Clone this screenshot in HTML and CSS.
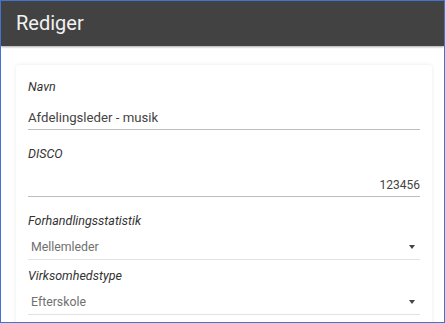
FILE: index.html
```html
<!DOCTYPE html>
<html lang="da">
<head>
    <meta charset="UTF-8">
    <meta name="viewport" content="width=device-width, initial-scale=1.0">
    <title>Rediger</title>
    <link rel="stylesheet" href="styles.css">
</head>
<body>
    <div class="frame">
        <header class="topbar">Rediger</header>
        <div class="content">
            <div class="card">
                <div class="field">
                    <div class="label">Navn</div>
                    <div class="input">Afdelingsleder - musik</div>
                </div>
                <div class="field">
                    <div class="label">DISCO</div>
                    <div class="input number">123456</div>
                </div>
                <div class="field select-field">
                    <div class="label">Forhandlingsstatistik</div>
                    <div class="select">
                        <span>Mellemleder</span>
                        <span class="arrow"></span>
                    </div>
                </div>
                <div class="field select-field">
                    <div class="label">Virksomhedstype</div>
                    <div class="select">
                        <span>Efterskole</span>
                        <span class="arrow"></span>
                    </div>
                </div>
            </div>
        </div>
    </div>
</body>
</html>
```

FILE: styles.css
```css
* {
    box-sizing: border-box;
}
html, body {
    margin: 0;
    padding: 0;
    background: #fff;
}
body {
    font-family: Roboto, "Liberation Sans", Arial, sans-serif;
    color: #333;
}
.frame {
    width: 445px;
    height: 323px;
    border: 1px solid #3f74d2;
    overflow: hidden;
}
.topbar {
    height: 45px;
    line-height: 45px;
    padding-left: 15px;
    background: #424242;
    color: #f2f2f2;
    font-size: 20px;
    box-shadow: 0 1px 2px rgba(0, 0, 0, 0.35);
    position: relative;
}
.content {
    padding: 19px 12px 0 15px;
}
.card {
    background: #fff;
    border-radius: 3px;
    box-shadow: 0 0 4px rgba(0, 0, 0, 0.09);
    padding: 14px 12px 20px 12px;
}
.field {
    margin-bottom: 16px;
}
.select-field {
    margin-bottom: 8px;
}
.label {
    font-size: 12.5px;
    line-height: 16px;
    font-style: italic;
    color: #333;
}
.input {
    margin-top: 13px;
    font-size: 13.2px;
    line-height: 20px;
    padding-bottom: 1px;
    color: #444;
    border-bottom: 1px solid #bdbdbd;
}
.number {
    text-align: right;
    font-size: 12px;
}
.select {
    margin-top: 8px;
    display: flex;
    justify-content: space-between;
    align-items: center;
    font-size: 12.3px;
    line-height: 20px;
    padding: 0 5px 2px 3px;
    color: #707070;
    border-bottom: 1px solid #e3e3e3;
}
.arrow {
    width: 0;
    height: 0;
    border-left: 3px solid transparent;
    border-right: 3px solid transparent;
    border-top: 4px solid #444;
}
```
